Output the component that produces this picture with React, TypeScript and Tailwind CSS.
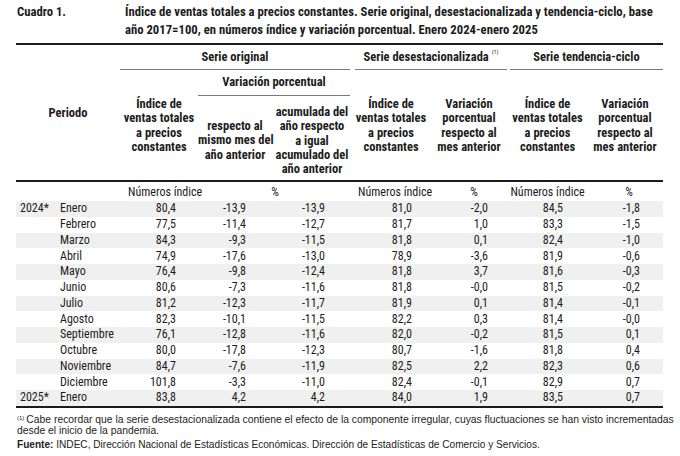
const narrow = "font-['Roboto_Condensed','Liberation_Sans_Narrow','Arial_Narrow',Roboto,sans-serif] font-stretch-condensed";

const rows = [
  ["2024*", "Enero", "80,4", "-13,9", "-13,9", "81,0", "-2,0", "84,5", "-1,8"],
  ["", "Febrero", "77,5", "-11,4", "-12,7", "81,7", "1,0", "83,3", "-1,5"],
  ["", "Marzo", "84,3", "-9,3", "-11,5", "81,8", "0,1", "82,4", "-1,0"],
  ["", "Abril", "74,9", "-17,6", "-13,0", "78,9", "-3,6", "81,9", "-0,6"],
  ["", "Mayo", "76,4", "-9,8", "-12,4", "81,8", "3,7", "81,6", "-0,3"],
  ["", "Junio", "80,6", "-7,3", "-11,6", "81,8", "-0,0", "81,5", "-0,2"],
  ["", "Julio", "81,2", "-12,3", "-11,7", "81,9", "0,1", "81,4", "-0,1"],
  ["", "Agosto", "82,3", "-10,1", "-11,5", "82,2", "0,3", "81,4", "-0,0"],
  ["", "Septiembre", "76,1", "-12,8", "-11,6", "82,0", "-0,2", "81,5", "0,1"],
  ["", "Octubre", "80,0", "-17,8", "-12,3", "80,7", "-1,6", "81,8", "0,4"],
  ["", "Noviembre", "84,7", "-7,6", "-11,9", "82,5", "2,2", "82,3", "0,6"],
  ["", "Diciembre", "101,8", "-3,3", "-11,0", "82,4", "-0,1", "82,9", "0,7"],
  ["2025*", "Enero", "83,8", "4,2", "4,2", "84,0", "1,9", "83,5", "0,7"],
];

// right padding for each value column
const valuePad = ["pr-[22px]", "pr-[26px]", "pr-[27px]", "pr-[18px]", "pr-[20px]", "pr-[24px]", "pr-[23px]"];

const cols = "grid grid-cols-[38px_66px_78px_74px_80px_78px_78px_79px_76px]";

const App = () => {
  return (
    <div className={`w-[680px] h-[456px] bg-white text-[#1c1c1c] overflow-hidden ${narrow}`}>
      <div className="flex pl-[17px] pt-[3px] text-[12.7px] font-bold leading-[18px]">
        <div className="w-[108px] shrink-0">Cuadro 1.</div>
        <div className="whitespace-nowrap">
          Índice de ventas totales a precios constantes. Serie original, desestacionalizada y tendencia-ciclo, base
          <br />
          año 2017=100, en números índice y variación porcentual. Enero 2024-enero 2025
        </div>
      </div>

      <div className="ml-[16px] w-[647px] mt-[4px] border-t-2 border-[#1c1c1c]">
        {/* header */}
        <div className={`${cols} grid-rows-[25px_26px_84px] text-[12.5px] font-bold leading-[14.3px] text-center border-b-2 border-[#1c1c1c]`}>
          <div className="col-start-1 col-span-2 row-start-1 row-span-3 pt-[61px]">Periodo</div>

          <div className="col-start-3 col-span-3 row-start-1 mr-[2px] border-b border-[#7a7a7a] flex items-center justify-center">
            Serie original
          </div>
          <div className="col-start-6 col-span-2 row-start-1 ml-[3px] mr-[1px] border-b border-[#7a7a7a] flex items-center justify-center whitespace-nowrap">
            <span>Serie desestacionalizada</span>
            <sup className="text-[6px] font-normal ml-[3px] -mt-[4px]">(1)</sup>
          </div>
          <div className="col-start-8 col-span-2 row-start-1 ml-[2px] border-b border-[#7a7a7a] flex items-center justify-center">
            Serie tendencia-ciclo
          </div>

          <div className="col-start-4 col-span-2 row-start-2 mr-[2px] border-b border-[#7a7a7a] flex items-center justify-center">
            Variación porcentual
          </div>

          <div className="col-start-3 row-start-3 pt-[1px] whitespace-nowrap">Índice de<br />ventas totales<br />a precios<br />constantes</div>
          <div className="col-start-4 row-start-3 pt-[23px] whitespace-nowrap">respecto al<br />mismo mes del<br />año anterior</div>
          <div className="col-start-5 row-start-3 pt-[9px] whitespace-nowrap">acumulada del<br />año respecto<br />a igual<br />acumulado del<br />año anterior</div>
          <div className="col-start-6 row-start-3 pt-[1px] whitespace-nowrap">Índice de<br />ventas totales<br />a precios<br />constantes</div>
          <div className="col-start-7 row-start-3 pt-[1px] whitespace-nowrap">Variación<br />porcentual<br />respecto al<br />mes anterior</div>
          <div className="col-start-8 row-start-3 pt-[1px] whitespace-nowrap">Índice de<br />ventas totales<br />a precios<br />constantes</div>
          <div className="col-start-9 row-start-3 pt-[1px] whitespace-nowrap">Variación<br />porcentual<br />respecto al<br />mes anterior</div>
        </div>

        {/* units */}
        <div className={`${cols} h-[19px] items-center text-[12px] text-center whitespace-nowrap`}>
          <div className="col-start-3 pl-[8px]">Números índice</div>
          <div className="col-start-4 col-span-2">%</div>
          <div className="col-start-6 pl-[6px]">Números índice</div>
          <div className="col-start-7 pl-[10px]">%</div>
          <div className="col-start-8">Números índice</div>
          <div className="col-start-9 pl-[8px]">%</div>
        </div>

        {/* data */}
        <div className="border-b-2 border-[#1c1c1c]">
          {rows.map((r, i) => (
            <div key={i} className={`${cols} h-[15.75px] items-center text-[12px] leading-[15px] ${i % 2 === 0 ? "bg-[#f0f0f0]" : ""}`}>
              <div className="pl-[4px]">{r[0]}</div>
              <div className="pl-[6px]">{r[1]}</div>
              {r.slice(2).map((v, j) => (
                <div key={j} className={`text-right ${valuePad[j]}`}>{v}</div>
              ))}
            </div>
          ))}
        </div>
      </div>

      <div className="pl-[17px] pt-[6px] font-['Liberation_Sans',Arial,sans-serif] font-stretch-normal leading-[11.5px] text-[#222] whitespace-nowrap">
        <div className="text-[10.35px]">
          <sup className="text-[6px] mr-[2px]">(1)</sup>Cabe recordar que la serie desestacionalizada contiene el efecto de la componente irregular, cuyas fluctuaciones se han visto incrementadas
        </div>
        <div className="text-[10.35px]">desde el inicio de la pandemia.</div>
        <div className="mt-[2px] text-[10.1px]">
          <span className="font-bold">Fuente:</span> INDEC, Dirección Nacional de Estadísticas Económicas. Dirección de Estadísticas de Comercio y Servicios.
        </div>
      </div>
    </div>
  );
};

export default App;
